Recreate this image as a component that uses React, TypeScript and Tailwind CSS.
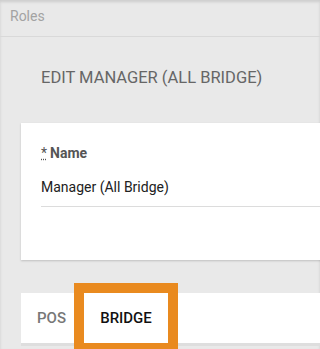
export default function App() {
  return (
    <div className="relative h-[349px] w-full overflow-hidden bg-[#e9e9e9] font-['Roboto',sans-serif] shadow-[inset_0_2px_3px_rgba(0,0,0,0.12)]">
      {/* breadcrumb */}
      <div className="h-[37px] border-b border-[#d9d9d9] pl-[10px] pt-[8px] text-[14px] leading-[16px] text-[#a3a3a3]">
        Roles
      </div>

      <div className="w-[calc(100%+40px)] pl-[21px]">
        <h1 className="mt-[29px] pl-[20px] text-[16.5px] leading-[24px] whitespace-nowrap text-[#666666]">
          EDIT MANAGER (ALL BRIDGE)
        </h1>

        {/* form card */}
        <div className="mt-[33px] bg-white px-[20px] pt-[20px] pb-[53px] shadow-[0_1px_2px_rgba(0,0,0,0.18)]">
          <label className="block text-[14px] font-bold leading-[20px] text-[#555555]">
            <abbr title="required" className="mr-[3px] font-normal underline decoration-dotted">*</abbr>
            Name
          </label>
          <div className="mt-[14px] border-b border-[#dcdcdc] pb-[9px] text-[14px] leading-[20px] text-[#212121]">
            Manager (All Bridge)
          </div>
        </div>

        {/* tabs */}
        <div className="mt-[33px] flex h-[53px] border-b-[3px] border-[#dedede] bg-white">
          <div className="flex w-[64px] items-center pl-[16px] text-[15px] font-medium text-[#777777]">
            POS
          </div>
          <div className="relative -mb-[3px] flex w-[82px] items-center justify-center border-b-[3px] border-[#4a8fe6] text-[15px] font-medium text-[#111111]">
            BRIDGE
            <div className="absolute -top-[10px] -right-[11px] -bottom-[10px] -left-[11px] z-10 border-[10px] border-[#e98a1f]" />
          </div>
        </div>
      </div>
    </div>
  );
}
